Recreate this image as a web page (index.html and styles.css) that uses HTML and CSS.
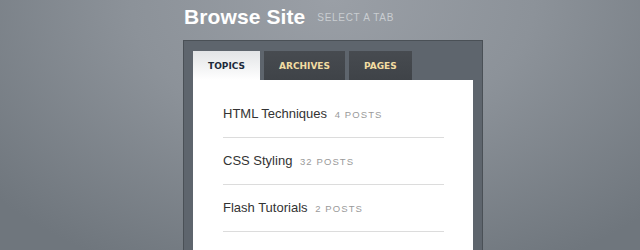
FILE: index.html
```html
<!DOCTYPE html>
<html lang="en">
<head>
    <meta charset="UTF-8">
    <meta name="viewport" content="width=device-width, initial-scale=1.0">
    <title>Browse Site</title>
    <link rel="stylesheet" href="styles.css">
</head>
<body>
    <div class="wrap">
        <div class="header">
            <h1>Browse Site</h1>
            <span class="subtitle">Select a tab</span>
        </div>

        <div class="panel">
            <ul class="tabs">
                <li class="tab active">Topics</li>
                <li class="tab">Archives</li>
                <li class="tab">Pages</li>
            </ul>
            <div class="content">
                <ul class="list">
                    <li>HTML Techniques <span class="count">4 posts</span></li>
                    <li>CSS Styling <span class="count">32 posts</span></li>
                    <li>Flash Tutorials <span class="count">2 posts</span></li>
                </ul>
            </div>
        </div>
    </div>
</body>
</html>
```

FILE: styles.css
```css
:root {
    --panel: #5e656d;
    --panel-border: #4a5056;
    --tab-label: #f2dca2;
    --text: #333;
    --muted: #9a9a9a;
}

html, body {
    height: 100%;
}

body {
    margin: 0;
    font-family: "Liberation Sans", Arial, sans-serif;
    background: radial-gradient(ellipse 70% 120% at 52% 0, #9a9fa6 0%, #8c9299 45%, #6f767d 100%);
    overflow: hidden;
}

.wrap {
    width: 300px;
    margin-left: 183px;
}

.header {
    display: flex;
    align-items: flex-start;
    padding: 5px 0 0 1px;
}

.header h1 {
    margin: 0;
    font-size: 21px;
    line-height: 24px;
    color: #fff;
    letter-spacing: 0.1px;
}

.subtitle {
    margin: 7px 0 0 12px;
    font-size: 10px;
    line-height: 12px;
    text-transform: uppercase;
    letter-spacing: 0.7px;
    color: #c9cdd1;
}

.panel {
    margin-top: 11px;
    background: var(--panel);
    border: 1px solid var(--panel-border);
    padding: 10px 9px 0;
}

.tabs {
    display: flex;
    gap: 4px;
    margin: 0;
    padding: 0;
    list-style: none;
}

.tab {
    height: 29px;
    line-height: 30px;
    padding: 0 15px;
    font-family: "DejaVu Sans", Verdana, sans-serif;
    font-size: 9px;
    font-weight: bold;
    text-transform: uppercase;
    color: var(--tab-label);
    background: linear-gradient(#474b50, #3f4348);
}

.tab.active {
    color: #1d2b3b;
    background: linear-gradient(#e2e4e6, #fff);
}

.content {
    background: #fff;
    min-height: 200px;
    padding: 11px 29px 0 30px;
}

.list {
    margin: 0;
    padding: 0;
    list-style: none;
}

.list li {
    height: 18px;
    padding: 14px 0;
    font-size: 13px;
    line-height: 18px;
    color: var(--text);
    border-bottom: 1px solid #dcdcdc;
}

.count {
    margin-left: 4px;
    font-size: 9.5px;
    line-height: 10px;
    text-transform: uppercase;
    letter-spacing: 1.1px;
    color: var(--muted);
}
```
